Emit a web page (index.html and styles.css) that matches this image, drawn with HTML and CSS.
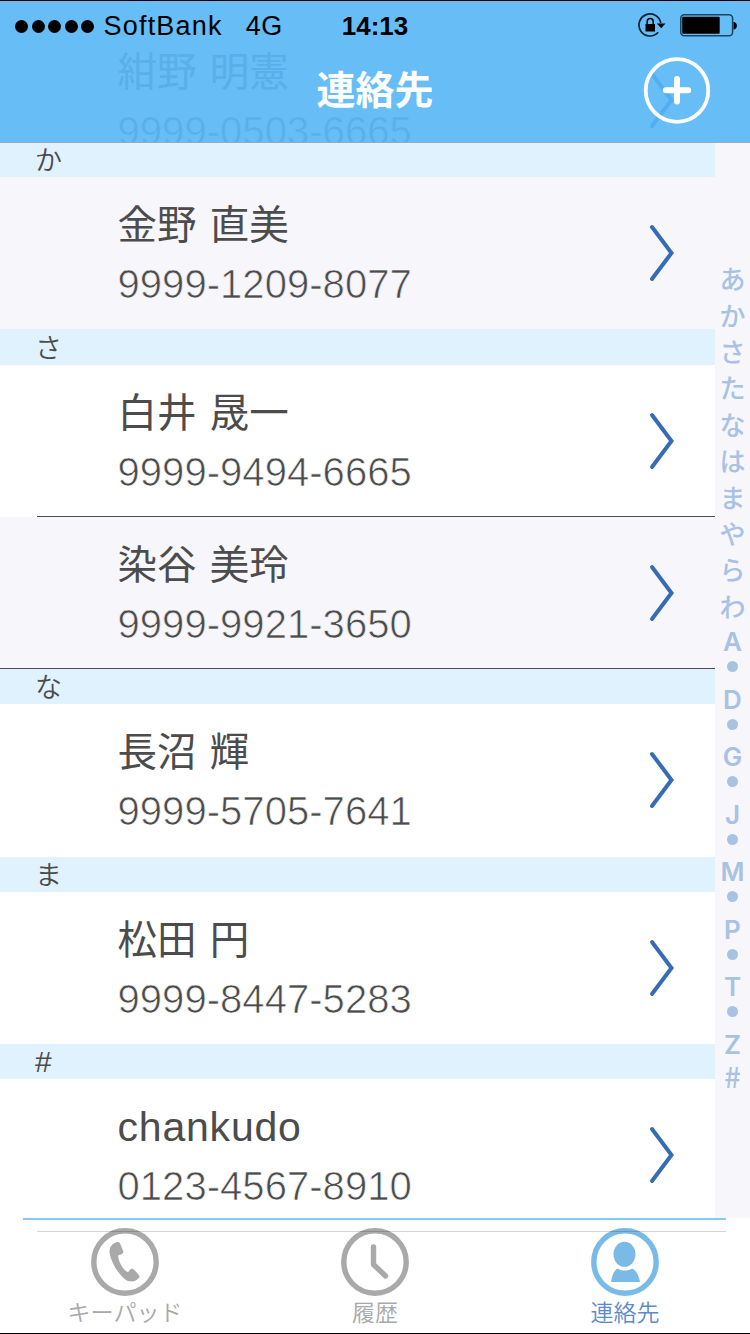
FILE: index.html
```html
<!DOCTYPE html>
<html lang="ja">
<head>
  <meta charset="utf-8">
  <title>連絡先</title>
  <link rel="stylesheet" href="styles.css">
</head>
<body>
  <svg class="defs">
    <symbol id="chevron" viewBox="0 0 28 60">
      <path d="M4 4 L23.5 30 L4 56" fill="none" stroke="currentColor" stroke-width="4" stroke-linecap="round" stroke-linejoin="miter"/>
    </symbol>
  </svg>

  <header class="header">
    <!-- row scrolled under the translucent bar -->
    <div class="contact under">
      <div class="info">
        <p class="name">紺野 明憲</p>
        <p class="number">9999-0503-6665</p>
      </div>
      <svg class="chevron"><use href="#chevron"/></svg>
    </div>
    <div class="status">
      <div class="carrier">
        <i class="signal"></i><i class="signal"></i><i class="signal"></i><i class="signal"></i><i class="signal"></i>
        <span class="operator">SoftBank</span>
        <span class="net">4G</span>
      </div>
      <div class="time">14:13</div>
      <div class="power">
        <svg width="28" height="26" viewBox="0 0 28 26">
          <path d="M20.2 19.3 A11 11 0 1 1 22.8 10" fill="none" stroke="#0b2231" stroke-width="1.7"/>
          <path d="M18.8 10.5 H27.5 L23.2 15.3 Z"/>
          <rect x="7.500" y="11" width="9.500" height="7.500"/>
          <path d="M9.2 11 V8.5 a3 3 0 0 1 6 0 V11" fill="none" stroke="#000" stroke-width="1.5"/>
        </svg>
        <svg width="58" height="24" viewBox="0 0 58 24">
          <rect x="0.8" y="0.8" width="51.8" height="21" rx="3.5" fill="none" stroke="#1c4560" stroke-width="1.5"/>
          <rect x="2.2" y="2.8" width="37.5" height="17" rx="1"/>
          <path d="M53.5 8 c4.5 0 4.5 7.5 0 7.5 z"/>
        </svg>
      </div>
    </div>
    <div class="titlebar">
      <h1>連絡先</h1>
      <svg class="add" width="68" height="68" viewBox="0 0 68 68" fill="none" stroke="#fff">
        <circle cx="34" cy="33.5" r="31.3" stroke-width="3.8"/>
        <path d="M34 22 V44.5 M22.8 33.2 H45.2" stroke-width="6" stroke-linecap="round"/>
      </svg>
    </div>
  </header>

  <main class="main">
    <div class="list">
      <h2 class="first">か</h2>
      <div class="contact alt">
        <div class="info">
          <p class="name">金野 直美</p>
          <p class="number">9999-1209-8077</p>
        </div>
        <svg class="chevron"><use href="#chevron"/></svg>
      </div>
      <h2 class="tall">さ</h2>
      <div class="contact line">
        <div class="info">
          <p class="name">白井 晟一</p>
          <p class="number">9999-9494-6665</p>
        </div>
        <svg class="chevron"><use href="#chevron"/></svg>
      </div>
      <div class="contact alt line-full">
        <div class="info">
          <p class="name">染谷 美玲</p>
          <p class="number">9999-9921-3650</p>
        </div>
        <svg class="chevron"><use href="#chevron"/></svg>
      </div>
      <h2>な</h2>
      <div class="contact tall-row">
        <div class="info">
          <p class="name">長沼 輝</p>
          <p class="number">9999-5705-7641</p>
        </div>
        <svg class="chevron"><use href="#chevron"/></svg>
      </div>
      <h2>ま</h2>
      <div class="contact">
        <div class="info">
          <p class="name">松田 円</p>
          <p class="number">9999-8447-5283</p>
        </div>
        <svg class="chevron"><use href="#chevron"/></svg>
      </div>
      <h2 class="other">#</h2>
      <div class="contact">
        <div class="info">
          <p class="name latin">chankudo</p>
          <p class="number">0123-4567-8910</p>
        </div>
        <svg class="chevron"><use href="#chevron"/></svg>
      </div>
    </div>
    <nav class="index">
      <span class="kana">あ</span>
      <span class="kana">か</span>
      <span class="kana">さ</span>
      <span class="kana">た</span>
      <span class="kana">な</span>
      <span class="kana">は</span>
      <span class="kana">ま</span>
      <span class="kana">や</span>
      <span class="kana">ら</span>
      <span class="kana">わ</span>
      <span>A</span><i></i>
      <span>D</span><i></i>
      <span>G</span><i></i>
      <span>J</span><i></i>
      <span>M</span><i></i>
      <span>P</span><i></i>
      <span>T</span><i></i>
      <span>Z</span>
      <span class="hash">#</span>
    </nav>
  </main>

  <footer class="tabs">
    <a class="tab">
      <svg width="68" height="68" viewBox="0 0 68 68">
        <circle cx="34" cy="34" r="31.2" fill="none" stroke="currentColor" stroke-width="5.4"/>
        <path fill="currentColor" d="M25.5 14.3 C27.5 13.5 28.8 14.5 29.3 16 L32.3 23.5 C32.8 25.8 30.5 26.7 27.3 27.2 C27 33 31.5 41.5 37 44.3 C38.5 43.3 39 40.3 41.3 40.5 C44 42.3 46.5 45 48.3 47.8 C49 49.8 46.5 51.5 44.5 52.5 C41.5 54 37 53.8 34 51.3 C26.5 45 20 34 18.6 25 C18 20 20.5 16 25.5 14.3 Z"/>
      </svg>
      <span>キーパッド</span>
    </a>
    <a class="tab">
      <svg width="68" height="68" viewBox="0 0 68 68" fill="none" stroke="currentColor">
        <circle cx="34" cy="34" r="31.2" stroke-width="5.4"/>
        <path d="M32.5 19 V36.5 L44.5 48" stroke-width="5.4" stroke-linecap="round" stroke-linejoin="round"/>
      </svg>
      <span>履歴</span>
    </a>
    <a class="tab active">
      <svg width="68" height="68" viewBox="0 0 68 68" fill="currentColor">
        <circle cx="34" cy="34" r="31.2" fill="none" stroke="currentColor" stroke-width="5.4"/>
        <ellipse cx="33.5" cy="26.3" rx="11" ry="12.5"/>
        <path d="M26.5 40.5 C31 43.3 36.5 43.3 41 40.5 C46 43 48 48 49 54 H20 C21 48 22.5 43 26.5 40.5 Z"/>
      </svg>
      <span>連絡先</span>
    </a>
  </footer>
</body>
</html>
```

FILE: styles.css
```css
* {
  box-sizing: border-box;
}
html, body {
  height: 100%;
  margin: 0;
}
body {
  display: flex;
  flex-direction: column;
  width: 750px;
  height: 1334px;
  overflow: hidden;
  background: #fff;
  color: #4c4c4c;
  font-family: "Liberation Sans", "Noto Sans CJK JP", sans-serif;
  border-top: 1px solid #000;
  border-bottom: 1px solid #000;
}
h1, h2, p {
  margin: 0;
  font-weight: normal;
}
.defs {
  position: absolute;
  width: 0;
  height: 0;
}

/* header */
.header {
  position: relative;
  flex: none;
  height: 142px;
  overflow: hidden;
  background: #67bdf6;
  border-bottom: 1px solid #a0a9b1;
}
.status {
  position: relative;
  display: grid;
  grid-template-columns: 325px 100px 325px;
  align-items: center;
  height: 50px;
  color: #000;
  font-size: 27px;
}
.carrier {
  display: flex;
  align-items: center;
  padding-left: 15px;
}
.signal {
  width: 13px;
  height: 13px;
  margin-right: 3.5px;
  border-radius: 50%;
  background: #000;
}
.operator {
  margin-left: 6px;
  letter-spacing: 1.2px;
}
.net {
  margin-left: 23px;
  letter-spacing: 0.5px;
}
.time {
  text-align: center;
  font-weight: bold;
  font-size: 26px;
}
.power {
  display: flex;
  justify-content: flex-end;
  align-items: center;
  gap: 14px;
  padding-right: 12px;
}
.titlebar {
  position: relative;
  display: grid;
  grid-template-columns: 250px 250px 250px;
  align-items: center;
  height: 80px;
}
.titlebar h1 {
  grid-column: 2;
  color: #fff;
  font-size: 39px;
  font-weight: bold;
  line-height: 60px;
  text-align: center;
}
.add {
  justify-self: end;
  margin-right: 39px;
}

/* contact list */
.main {
  display: flex;
  flex: none;
  height: 1075px;
  overflow: hidden;
}
.list {
  width: 715px;
}
.list h2 {
  height: 35px;
  padding-left: 35px;
  background: #e1f2ff;
  font-family: "Noto Sans CJK JP", sans-serif;
  font-size: 27px;
  font-weight: 350;
  line-height: 34px;
}
.list h2.first {
  height: 34px;
  line-height: 31px;
}
.list h2.tall {
  height: 36px;
  line-height: 35px;
}
.list h2.other {
  font-family: "Liberation Sans", sans-serif;
  font-size: 30px;
  line-height: 36px;
}
.contact {
  --row: #fff;
  position: relative;
  display: flex;
  justify-content: space-between;
  width: 715px;
  height: 152px;
  padding: 15px 39px 0 117.5px;
  background: var(--row);
}
.alt {
  --row: #f7f6fb;
}
.tall-row {
  height: 153px;
}
.line::after,
.line-full::after {
  content: "";
  position: absolute;
  left: 37px;
  right: 0;
  bottom: 0;
  height: 1px;
  background: #4c4c4c;
}
.line-full::after {
  left: 0;
}
.name {
  font-family: "Noto Sans CJK JP", sans-serif;
  font-weight: 400;
  font-size: 39.5px;
  line-height: 60px;
  word-spacing: 4.5px;
}
.latin {
  padding-top: 3px;
  margin-bottom: -3px;
  font-family: "Liberation Sans", sans-serif;
  font-size: 41px;
  letter-spacing: 0.8px;
}
/* outline in the row colour thins the digits */
.number {
  font-size: 40px;
  line-height: 64px;
  letter-spacing: 0.05px;
  white-space: nowrap;
  -webkit-text-stroke: 0.7px var(--row);
}
.chevron {
  width: 28px;
  height: 60px;
  margin-top: 31px;
  color: #366cb6;
}
.under {
  --row: #67bdf6;
  position: absolute;
  top: 23px;
  left: 0;
  color: #59afe8;
}
.under .chevron {
  color: #52aef0;
}

/* side index */
.index {
  display: flex;
  flex-direction: column;
  align-items: center;
  width: 35px;
  padding-top: 119.2px;
  background: #f7f6fb;
  color: #a8c2e4;
  font-family: Inter, "Liberation Sans", sans-serif;
  font-size: 26px;
  font-weight: 600;
}
.index span {
  flex: none;
  height: 32px;
  line-height: 31px;
}
.index .kana {
  height: 36.4px;
  font-family: "Noto Sans CJK JP", sans-serif;
  font-weight: 500;
  line-height: 32px;
}
.index .hash {
  font-family: "Noto Sans CJK JP", sans-serif;
  font-size: 29px;
  font-weight: 500;
  line-height: 29px;
}
.index i {
  flex: none;
  width: 11px;
  height: 11px;
  margin: 3px 0 11.5px;
  border-radius: 50%;
  background: #a8c2e4;
}

/* tab bar */
.tabs {
  position: relative;
  display: grid;
  grid-template-columns: repeat(3, 250px);
  flex: 1;
  padding-top: 10px;
  background: #fff;
}
.tabs::before {
  content: "";
  position: absolute;
  top: 0;
  left: 23px;
  right: 24px;
  height: 2px;
  background: #7fcbfb;
}
.tabs::after {
  content: "";
  position: absolute;
  top: 13px;
  left: 37px;
  right: 24px;
  height: 1px;
  background: rgba(0, 0, 0, .17);
}
.tab {
  display: flex;
  flex-direction: column;
  align-items: center;
  color: #a9a9a9;
  font-family: "Noto Sans CJK JP", sans-serif;
  font-size: 23px;
  font-weight: 350;
}
.tab span {
  line-height: 30px;
}
.active {
  color: #79bbe6;
}
.active span {
  color: #5c8bcb;
}
```
